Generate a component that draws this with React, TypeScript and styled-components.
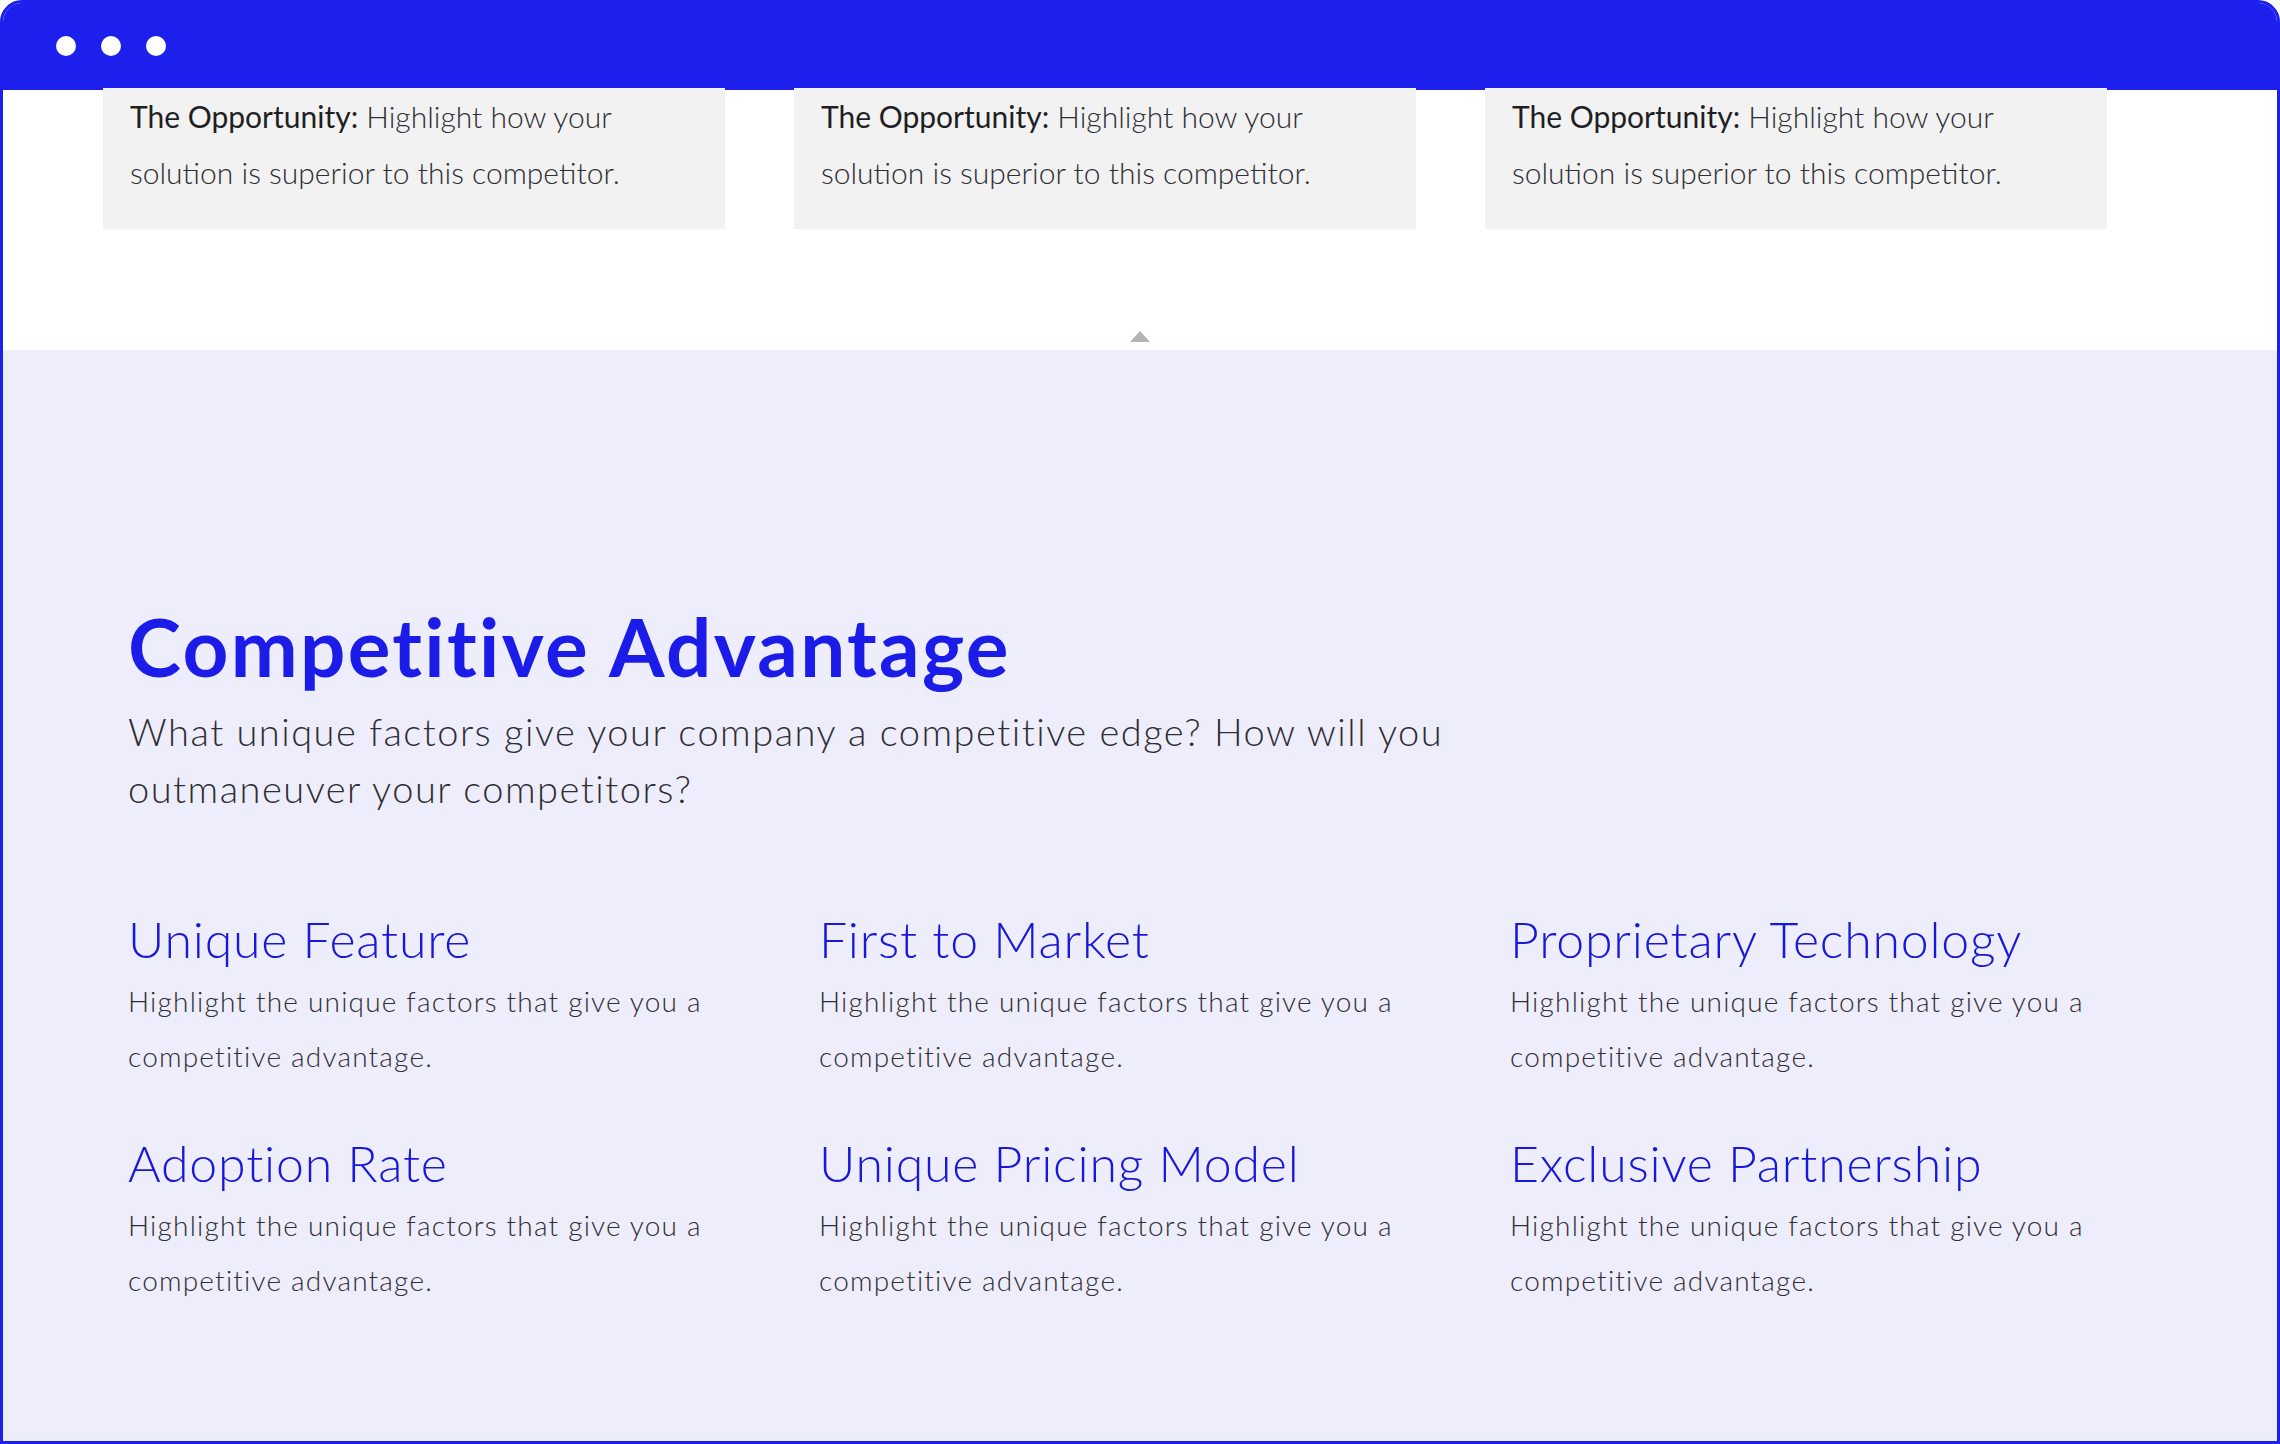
import React from 'react';
import styled, { createGlobalStyle } from 'styled-components';

const blue = '#1d1fed';
const ink = '#2e2e33';

const GlobalStyle = createGlobalStyle`
   html, body {
      margin: 0;
      padding: 0;
      background: #ffffff;
   }
   body {
      font-family: Lato, "Open Sans", "Liberation Sans", sans-serif;
      -webkit-font-smoothing: antialiased;
   }
   * {
      box-sizing: border-box;
   }
`;

const Frame = styled.div`
   width: 2280px;
   height: 1444px;
   border: 3px solid ${blue};
   border-radius: 22px 22px 0 0;
   overflow: hidden;
   display: flex;
   flex-direction: column;
   background: #ffffff;
`;

const TopBar = styled.div`
   height: 87px;
   flex: none;
   background: ${blue};
   display: flex;
   align-items: center;
   gap: 25px;
   padding: 0 0 2px 53px;
`;

const Dot = styled.span`
   width: 20px;
   height: 20px;
   border-radius: 50%;
   background: #ffffff;
`;

const CompetitorStrip = styled.section`
   height: 260px;
   flex: none;
   display: flex;
   flex-direction: column;
   padding: 0 0 0 100px;
`;

const CardRow = styled.div`
   display: grid;
   grid-template-columns: repeat(3, 622px);
   column-gap: 69px;
`;

const OpportunityCard = styled.div`
   background: #f2f2f2;
   padding: 0 20px 29px 27px;
   font-size: 30px;
   line-height: 56px;
   font-weight: 300;
   color: ${ink};
   margin-top: -2px;
`;

const Label = styled.strong`
   font-weight: 400;
   color: #1f1f23;
`;

const Caret = styled.span`
   margin: auto 0 8px 1027px;
   width: 0;
   height: 0;
   border-left: 10.5px solid transparent;
   border-right: 10.5px solid transparent;
   border-bottom: 11px solid #b4b4b4;
`;

const AdvantageSection = styled.section`
   flex: 1;
   background: #eeedfb;
   padding: 256px 0 0 125px;
`;

const Heading = styled.h1`
   margin: 0;
   font-size: 80px;
   line-height: 80px;
   font-weight: 700;
   color: #1c1ce8;
   letter-spacing: 2.3px;
`;

const Lead = styled.p`
   margin: 17px 0 0;
   width: 1400px;
   font-size: 38px;
   line-height: 57px;
   font-weight: 300;
   letter-spacing: 1.5px;
   color: ${ink};
`;

const FeatureGrid = styled.div`
   margin-top: 92px;
   display: grid;
   grid-template-columns: repeat(3, 622px);
   column-gap: 69px;
   row-gap: 49px;
`;

const Feature = styled.div`
   display: flex;
   flex-direction: column;
   gap: 5px;
`;

const FeatureTitle = styled.h3`
   margin: 0;
   font-size: 50px;
   line-height: 60px;
   font-weight: 300;
   letter-spacing: 0.8px;
   color: #1818d8;
`;

const FeatureText = styled.p`
   margin: 0;
   font-size: 28px;
   line-height: 55px;
   font-weight: 300;
   letter-spacing: 1.2px;
   color: ${ink};
   width: 610px;
`;

const features = [
   'Unique Feature',
   'First to Market',
   'Proprietary Technology',
   'Adoption Rate',
   'Unique Pricing Model',
   'Exclusive Partnership',
];

export default function App() {
   return (
      <>
         <GlobalStyle />
         <Frame>
            <TopBar>
               <Dot />
               <Dot />
               <Dot />
            </TopBar>
            <CompetitorStrip>
               <CardRow>
                  {[0, 1, 2].map((i) => (
                     <OpportunityCard key={i}>
                        <Label>The Opportunity:</Label> Highlight how your
                        <br />
                        solution is superior to this competitor.
                     </OpportunityCard>
                  ))}
               </CardRow>
               <Caret />
            </CompetitorStrip>
            <AdvantageSection>
               <Heading>Competitive Advantage</Heading>
               <Lead>
                  What unique factors give your company a competitive edge? How will you
                  <br />
                  outmaneuver your competitors?
               </Lead>
               <FeatureGrid>
                  {features.map((title) => (
                     <Feature key={title}>
                        <FeatureTitle>{title}</FeatureTitle>
                        <FeatureText>
                           Highlight the unique factors that give you a
                           <br />
                           competitive advantage.
                        </FeatureText>
                     </Feature>
                  ))}
               </FeatureGrid>
            </AdvantageSection>
         </Frame>
      </>
   );
}
